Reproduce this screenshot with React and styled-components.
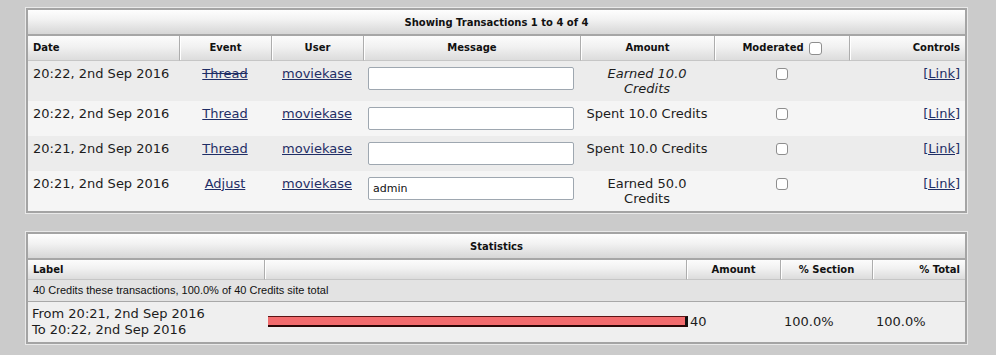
import React from 'react';
import styled, { createGlobalStyle } from 'styled-components';

const GlobalStyle = createGlobalStyle`
  html, body { margin: 0; padding: 0; background: #cbcbcb; }
  body { font-family: "DejaVu Sans", Verdana, sans-serif; color: #1c1c1c; }
`;

const Page = styled.div`
  display: flex;
  flex-direction: column;
  gap: 17px;
  padding: 7px 0 12px 25px;
`;

const Panel = styled.section`
  width: 943px;
  box-sizing: border-box;
  border: 1px solid #e9e9e9;
`;

const Frame = styled.div`
  border: 2px solid #a4a4a4;
  background: #f3f3f3;
`;

const Table = styled.table`
  width: 100%;
  border-collapse: separate;
  border-spacing: 0;
  table-layout: fixed;
`;

const TitleCell = styled.th`
  padding: 7px 0 5px;
  line-height: 12px;
  border-bottom: 2px solid #a6a6a6;
  background: linear-gradient(#fefefe, #f2f2f2 40%, #d6d6d6);
  font-size: 10px;
  font-weight: bold;
  text-align: center;
  color: #111;
`;

const HeadCell = styled.th`
  padding: ${(p) => (p.$tall ? '5px 5px' : '3px 5px')};
  line-height: 13px;
  font-size: 10px;
  font-weight: bold;
  color: #111;
  white-space: nowrap;
  text-align: ${(p) => p.$align || 'center'};
  background: linear-gradient(#fcfcfc, #f1f1f1 45%, #dcdcdc);
  border-bottom: 1px solid #c6c6c6;
  & + & {
    border-left: 1px solid #adadad;
    box-shadow: inset 1px 0 0 #ffffff;
  }
`;

const Row = styled.tr`
  background: ${(p) => (p.$alt ? '#ececec' : '#f5f5f5')};
`;

const Cell = styled.td`
  padding: 5px 5px;
  vertical-align: top;
  font-size: 13px;
  line-height: 15px;
  text-align: ${(p) => p.$align || 'left'};
  font-style: ${(p) => (p.$italic ? 'italic' : 'normal')};
`;

const Link = styled.a`
  color: #1f2e66;
  text-decoration: ${(p) => (p.$struck ? 'underline line-through' : 'underline')};
  cursor: pointer;
`;

const MessageInput = styled.input`
  display: block;
  box-sizing: border-box;
  width: 206px;
  height: 23px;
  margin: 1px 0;
  padding: 0 4px;
  border: 1px solid #9ea7b0;
  border-radius: 2px;
  background: #fff;
  font-family: "DejaVu Sans", Verdana, sans-serif;
  font-size: 11px;
  color: #111;
`;

const Check = styled.input`
  appearance: none;
  -webkit-appearance: none;
  box-sizing: border-box;
  width: ${(p) => (p.$head ? '13px' : '12px')};
  height: ${(p) => (p.$head ? '13px' : '12px')};
  margin: ${(p) => (p.$head ? '0 0 0 5px' : '2px 0 0')};
  vertical-align: ${(p) => (p.$head ? 'middle' : 'top')};
  border: 1px solid #8e8e8e;
  border-radius: 3px;
  background: #fff;
`;

const NoteCell = styled.td`
  padding: 5px 5px;
  line-height: 11px;
  font-family: "Liberation Sans", Arial, sans-serif;
  font-size: 11px;
  color: #111;
  background: #e3e3e3;
  border-bottom: 1px solid #a8a8a8;
`;

const StatRow = styled.tr`
  background: #efefef;
`;

const StatCell = styled.td`
  padding: ${(p) => (p.$bar ? '0 0 0 4px' : '4px 4px')};
  line-height: 16px;
  font-size: 13px;
  vertical-align: middle;
  text-align: left;
`;

const Bar = styled.div`
  display: block;
  height: 8px;
  margin-right: -2px;
  background: #f26b6d;
  border-top: 1px solid #5c1515;
  border-bottom: 2px solid #2a0606;
  border-right: 3px solid #111;
`;

const transactions = [
  { date: '20:22, 2nd Sep 2016', event: 'Thread', struck: true, msg: '', amount: 'Earned 10.0 Credits', italic: true },
  { date: '20:22, 2nd Sep 2016', event: 'Thread', msg: '', amount: 'Spent 10.0 Credits' },
  { date: '20:21, 2nd Sep 2016', event: 'Thread', msg: '', amount: 'Spent 10.0 Credits' },
  { date: '20:21, 2nd Sep 2016', event: 'Adjust', msg: 'admin', amount: 'Earned 50.0 Credits' },
];

export default function App() {
  return (
    <>
      <GlobalStyle />
      <Page>
        <Panel>
          <Frame>
            <Table>
              <colgroup>
                <col style={{ width: 151 }} />
                <col style={{ width: 92 }} />
                <col style={{ width: 92 }} />
                <col style={{ width: 217 }} />
                <col style={{ width: 134 }} />
                <col style={{ width: 135 }} />
                <col />
              </colgroup>
              <thead>
                <tr>
                  <TitleCell colSpan={7}>Showing Transactions 1 to 4 of 4</TitleCell>
                </tr>
                <tr>
                  <HeadCell $tall $align="left">Date</HeadCell>
                  <HeadCell $tall>Event</HeadCell>
                  <HeadCell $tall>User</HeadCell>
                  <HeadCell $tall>Message</HeadCell>
                  <HeadCell $tall>Amount</HeadCell>
                  <HeadCell $tall>
                    Moderated
                    <Check type="checkbox" $head />
                  </HeadCell>
                  <HeadCell $tall $align="right">Controls</HeadCell>
                </tr>
              </thead>
              <tbody>
                {transactions.map((t, i) => (
                  <Row key={i} $alt={i % 2 === 0}>
                    <Cell>{t.date}</Cell>
                    <Cell $align="center">
                      <Link $struck={t.struck}>{t.event}</Link>
                    </Cell>
                    <Cell $align="center">
                      <Link>moviekase</Link>
                    </Cell>
                    <Cell>
                      <MessageInput type="text" defaultValue={t.msg} />
                    </Cell>
                    <Cell $align="center" $italic={t.italic}>
                      {t.amount}
                    </Cell>
                    <Cell $align="center">
                      <Check type="checkbox" />
                    </Cell>
                    <Cell $align="right">
                      <Link>[Link]</Link>
                    </Cell>
                  </Row>
                ))}
              </tbody>
            </Table>
          </Frame>
        </Panel>

        <Panel>
          <Frame>
            <Table>
              <colgroup>
                <col style={{ width: 236 }} />
                <col style={{ width: 422 }} />
                <col style={{ width: 94 }} />
                <col style={{ width: 92 }} />
                <col />
              </colgroup>
              <thead>
                <tr>
                  <TitleCell colSpan={5}>Statistics</TitleCell>
                </tr>
                <tr>
                  <HeadCell $align="left">Label</HeadCell>
                  <HeadCell />
                  <HeadCell>Amount</HeadCell>
                  <HeadCell>% Section</HeadCell>
                  <HeadCell $align="right">% Total</HeadCell>
                </tr>
              </thead>
              <tbody>
                <tr>
                  <NoteCell colSpan={5}>
                    40 Credits these transactions, 100.0% of 40 Credits site total
                  </NoteCell>
                </tr>
                <StatRow>
                  <StatCell>
                    From 20:21, 2nd Sep 2016
                    <br />
                    To 20:22, 2nd Sep 2016
                  </StatCell>
                  <StatCell $bar>
                    <Bar />
                  </StatCell>
                  <StatCell>40</StatCell>
                  <StatCell>100.0%</StatCell>
                  <StatCell>100.0%</StatCell>
                </StatRow>
              </tbody>
            </Table>
          </Frame>
        </Panel>
      </Page>
    </>
  );
}
